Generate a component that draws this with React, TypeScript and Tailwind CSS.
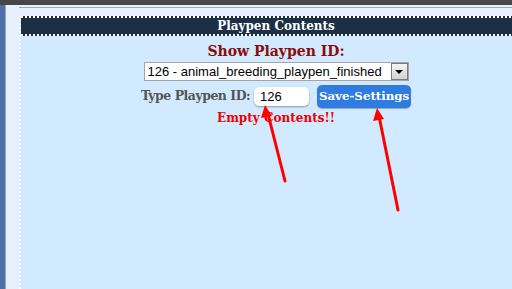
const serif = { fontFamily: '"DejaVu Serif", Georgia, serif' };

export default function App() {
    return (
        <div className="relative w-[512px] h-[289px] overflow-hidden flex flex-col bg-[#e6f0ff]">
            <div className="h-[5px] bg-[#474747] shrink-0" />
            <div className="flex flex-1 min-w-0">
                <div className="w-[5px] shrink-0 bg-[#4f6fa7]" />
                <div className="w-px shrink-0 bg-[#9ea8b8]" />
                <div className="flex-1 min-w-0 flex flex-col pt-[2px] pl-[13px]">
                    <div className="border-t border-[#a3a6ad] h-[9px]" />
                    <div className="flex-1 w-[512px] shrink-0 bg-[#d2eaff] border-l-2 border-dotted border-white">
                        <div
                            className="h-[20px] bg-[#1d2f45] border-y-2 border-dotted border-white flex items-center justify-center text-white font-bold text-[12px]"
                            style={serif}
                        >
                            Playpen Contents
                        </div>
                        <div className="flex flex-col items-center" style={serif}>
                            <div className="mt-[5px] h-[20px] leading-[20px] text-[14px] font-bold text-[#8b0a0a]">Show Playpen ID:</div>
                            <div className="mt-px w-[265px] h-[19px] bg-white border border-[#a5a5a5] flex items-center">
                                <span className="flex-1 pl-[3px] text-[13px] text-black font-['Liberation_Sans',Arial,sans-serif]">
                                    126 - animal_breeding_playpen_finished
                                </span>
                                <span className="w-[17px] h-[17px] bg-gradient-to-b from-[#f4f4f4] to-[#d4d4d4] border border-[#7a7a7a] flex items-center justify-center">
                                    <span className="w-0 h-0 border-x-[4px] border-x-transparent border-t-[4px] border-t-black" />
                                </span>
                            </div>
                            <div className="mt-[4px] flex items-center">
                                <span className="text-[12.5px] tracking-[-0.5px] font-bold text-[#555555]">Type Playpen ID:</span>
                                <div className="ml-[4px] w-[55px] h-[19px] bg-white rounded-[5px] shadow-[0_1px_2px_rgba(0,0,0,0.35)] flex items-center pl-[6px] text-[13px] text-black font-['Liberation_Sans',Arial,sans-serif]">
                                    126
                                </div>
                                <button className="ml-[8px] w-[94px] h-[23px] bg-[#2f7be0] rounded-[5px] text-white font-bold text-[11.8px] shadow-[0_1px_1px_rgba(0,0,0,0.3)]">
                                    Save-Settings
                                </button>
                            </div>
                            <div className="mt-[2px] text-[12px] font-bold text-[#ee0000] leading-[17px]">Empty Contents!!</div>
                        </div>
                    </div>
                </div>
            </div>
            <svg className="absolute inset-0 pointer-events-none" width="512" height="289">
                <g stroke="#ff0000" strokeWidth="3" strokeLinecap="round">
                    <line x1="285" y1="181" x2="268" y2="114" />
                    <line x1="398" y1="210" x2="379" y2="116" />
                </g>
                <polygon points="265,105 261,118 272,116" fill="#ff0000" />
                <polygon points="377,108 373,121 384,119" fill="#ff0000" />
            </svg>
        </div>
    );
}
